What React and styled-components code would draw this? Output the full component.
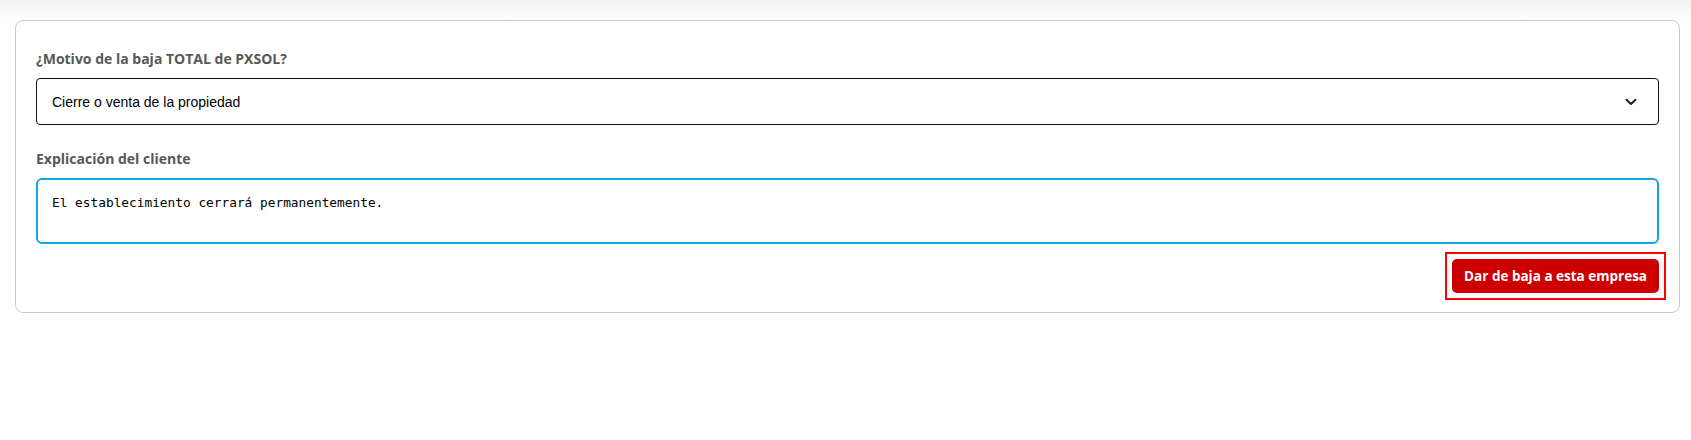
import React from "react";
import styled, { createGlobalStyle } from "styled-components";

const Global = createGlobalStyle`
  html, body { margin: 0; padding: 0; background: #fff; }
  body { font-family: "Open Sans", "Liberation Sans", sans-serif; }
  * { box-sizing: border-box; }
`;

const Page = styled.div`
  width: 1691px;
  min-height: 440px;
  padding: 20px 11px 0 15px;
  background: linear-gradient(to bottom, #f2f2f2 0px, #fbfbfb 14px, #ffffff 20px);
`;

const Card = styled.section`
  border: 1px solid #c6cbd3;
  border-radius: 8px;
  background: #fff;
  padding: 28px 20px 12px 20px;
  display: flex;
  flex-direction: column;
`;

const Field = styled.div`
  display: flex;
  flex-direction: column;
  gap: 9px;
  margin-bottom: ${(p) => p.$mb || 0}px;
`;

const Label = styled.label`
  font-family: "Open Sans", sans-serif;
  font-weight: 700;
  font-size: 14px;
  line-height: 20px;
  color: #585858;
`;

const SelectBox = styled.div`
  height: 47px;
  border: 1px solid #111;
  border-radius: 4px;
  display: flex;
  align-items: center;
  justify-content: space-between;
  padding: 0 21px 0 15px;
  font-family: "Liberation Sans", Arial, sans-serif;
  font-size: 14px;
  color: #000;
`;

const Chevron = styled.svg`
  width: 12px;
  height: 8px;
  display: block;
`;

const TextArea = styled.div`
  height: 66px;
  border: 2px solid #0ea5e9;
  border-radius: 6px;
  padding: 15px 14px;
  font-family: "DejaVu Sans Mono", monospace;
  font-size: 12.8px;
  line-height: 15px;
  color: #000;
`;

const Actions = styled.div`
  display: flex;
  justify-content: flex-end;
  margin-top: 8px;
  margin-right: -7px;
`;

const Highlight = styled.span`
  display: inline-flex;
  border: 2px solid #ff0000;
  padding: 5px;
`;

const DangerButton = styled.button`
  height: 34px;
  padding: 0 12px;
  border: none;
  border-radius: 5px;
  background: #cc0000;
  color: #fff;
  font-family: "Open Sans", sans-serif;
  font-weight: 700;
  font-size: 13.5px;
  cursor: pointer;
`;

export default function App() {
  return (
    <>
      <Global />
      <Page>
        <Card>
          <Field $mb={24}>
            <Label>¿Motivo de la baja TOTAL de PXSOL?</Label>
            <SelectBox>
              <span>Cierre o venta de la propiedad</span>
              <Chevron viewBox="0 0 12 8">
                <path d="M1.5 1.8 L6 6 L10.5 1.8" fill="none" stroke="#222" strokeWidth="2" strokeLinecap="round" strokeLinejoin="round" />
              </Chevron>
            </SelectBox>
          </Field>
          <Field>
            <Label>Explicación del cliente</Label>
            <TextArea>El establecimiento cerrará permanentemente.</TextArea>
          </Field>
          <Actions>
            <Highlight>
              <DangerButton>Dar de baja a esta empresa</DangerButton>
            </Highlight>
          </Actions>
        </Card>
      </Page>
    </>
  );
}
